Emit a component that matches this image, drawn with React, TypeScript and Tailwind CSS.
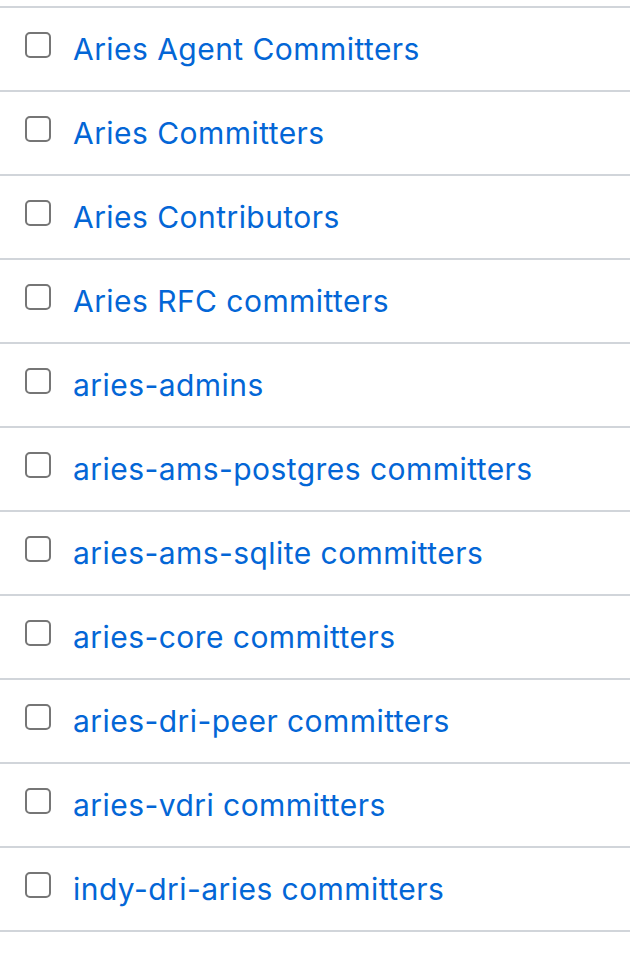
import React from 'react';

const teams = [
	'Aries Agent Committers',
	'Aries Committers',
	'Aries Contributors',
	'Aries RFC committers',
	'aries-admins',
	'aries-ams-postgres committers',
	'aries-ams-sqlite committers',
	'aries-core committers',
	'aries-dri-peer committers',
	'aries-vdri committers',
	'indy-dri-aries committers',
];

const App = () => {
	return (
		<div className="w-[630px] h-[962px] bg-white pt-[6px] font-['Inter','Liberation_Sans',sans-serif]">
			<ul className="border-t-2 border-[#d1d5da]">
				{teams.map((team) => (
					<li
						key={team}
						className="h-[84px] border-b-2 border-[#d1d5da] flex items-center pl-[25px]">
						<span className="w-[26px] h-[26px] rounded-[5px] border-2 border-[#767676] bg-white shrink-0 -mt-[8px]" />
						<a href="#" className="ml-[22px] text-[30px] leading-none text-[#0366d6] tracking-[0.45px]">
							{team}
						</a>
					</li>
				))}
			</ul>
		</div>
	);
};

export default App;
